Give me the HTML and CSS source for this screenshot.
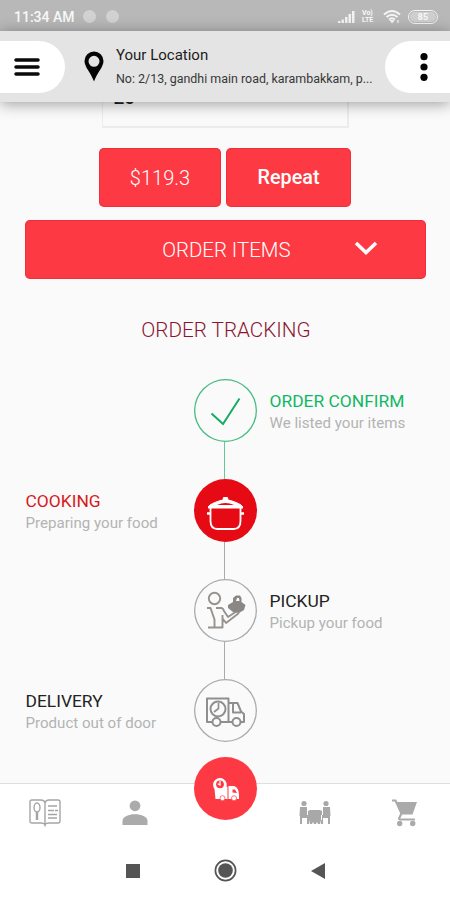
FILE: index.html
```html
<!DOCTYPE html>
<html lang="en">
<head>
<meta charset="utf-8">
<title>Order tracking</title>
<link rel="stylesheet" href="styles.css">
</head>
<body>
<div class="status">
  <span class="clock">11:34 AM</span>
  <i class="blob"></i><i class="blob"></i>
  <svg class="signal" width="18" height="14" viewBox="0 0 18 14" fill="#f2f2f2"><path d="M0 11h2.500v2H0zM3.500 9.500H6V13H3.500zM7 7h2.500v6H7zM10.500 4H13v9h-2.500zM14 1h2.500v12H14z"/></svg>
  <span class="volte"><b>Vo)</b><b>LTE</b></span>
  <svg class="wifi" width="19" height="15" viewBox="0 0 19 15" fill="none" stroke="#f5f5f5" stroke-width="2"><path d="M1 5.500q8-7 16 0M3.500 8q5.500-4.500 11 0M6 10.500q3-2.500 6 0"/><path d="M7.500 11.500L9 13.500l1.500-2zM15 11v3" stroke-width="1.200"/></svg>
  <span class="battery"><b>85</b></span>
</div>
<header class="header">
  <div class="pill pill-left">
    <svg width="26" height="20" viewBox="0 0 26 20" stroke="#0a0a0a" stroke-width="3.500" stroke-linecap="round"><path d="M2 3h22M2 10h22M2 17h22"/></svg>
  </div>
  <svg class="pin" width="20" height="31" viewBox="0 0 20 31"><path fill="#050505" fill-rule="evenodd" d="M10 .5A9.500 9.500 0 0 0 .5 10C.5 16 7 22 10 30.500 13 22 19.500 16 19.500 10A9.500 9.500 0 0 0 10 .5zM10 4.800a5.500 5.500 0 1 1 0 11 5.500 5.500 0 0 1 0-11z"/></svg>
  <div class="place">
    <div class="place-name">Your Location</div>
    <div class="place-address">No: 2/13, gandhi main road, karambakkam, p...</div>
  </div>
  <div class="pill pill-right">
    <svg width="8" height="28" viewBox="0 0 8 28" fill="#050505"><circle cx="4" cy="3.700" r="3.600"/><circle cx="4" cy="14" r="3.600"/><circle cx="4" cy="24.300" r="3.600"/></svg>
  </div>
</header>
<main class="content">
  <div class="field"><div class="field-text">20</div></div>
  <div class="actions">
    <div class="btn price">$119.3</div>
    <div class="btn repeat">Repeat</div>
  </div>
  <div class="btn items"><span>ORDER ITEMS</span>
    <svg width="24" height="16" viewBox="0 0 24 16" fill="none" stroke="#fff" stroke-width="3.500"><path d="M2 3l10 9.500L22 3"/></svg>
  </div>
  <h1 class="title">ORDER TRACKING</h1>
  <section class="timeline">
    <div class="step confirm">
      <div class="mark"><svg width="63" height="63" viewBox="0 0 63 63" fill="none" stroke="#16ac62" stroke-width="2"><path d="M17.500 34.500L29 45 45.500 19.500"/></svg></div>
      <div class="label right"><div class="name w-confirm">ORDER CONFIRM</div><div class="note">We listed your items</div></div>
    </div>
    <div class="step cooking">
      <div class="label left"><div class="name w-cooking">COOKING</div><div class="note">Preparing your food</div></div>
      <div class="mark"><svg width="63" height="63" viewBox="0 0 63 63" fill="none" stroke="#fff" stroke-width="1.800" stroke-linejoin="round"><path d="M14 28.500h35M16.500 29v13q0 8 7 8h16q7 0 7-8V29"/><path d="M16 34.500h-3M47 34.500h3" stroke-width="2.500"/><path fill="#fff" stroke-width="1" d="M14 28c2-3 7-4.500 11-6l4-1 .5-2.500h4l.5 2.500 4 1c4 1.500 9 3 11 6z"/><path fill="#e60a15" stroke="none" d="M23 26q8.500-4 17 0z"/></svg></div>
    </div>
    <div class="step pickup">
      <div class="mark"><svg width="63" height="63" viewBox="0 0 63 63" fill="none" stroke="#96928f" stroke-width="1.900" stroke-linejoin="round"><circle cx="20.500" cy="19.500" r="5.700"/><path d="M13 29h3.500l4 11.500V48M14 48.500h14.500V36M22 29h5q2 0 3 3l4 6 9-6M29 40l3 4 13-10"/><path fill="#8b8784" stroke="none" d="M34 26l5-3v-4l3-2.500h4l1.500 2.500v4l4 3-1.500 5-5 3-6-1-5-4z"/><path d="M42 22l1-3h2l.5 3z" fill="#fafafa" stroke="none"/></svg></div>
      <div class="label right"><div class="name w-pickup">PICKUP</div><div class="note">Pickup your food</div></div>
    </div>
    <div class="step delivery">
      <div class="label left"><div class="name w-delivery">DELIVERY</div><div class="note">Product out of door</div></div>
      <div class="mark"><svg width="63" height="63" viewBox="0 0 63 63" fill="none" stroke="#8f8f8f" stroke-width="2" stroke-linejoin="round"><path d="M18 43h-5V19.500h21.500V43H27M34.500 24h9l3.500 8.500 3 2.500v8h-3M34.500 43H38M39 25v8.500h8"/><circle cx="24" cy="30" r="7.500"/><path d="M24.500 24v5.500L20 33" stroke-width="1.700"/><circle cx="22.500" cy="43" r="4"/><circle cx="42.500" cy="43" r="4"/></svg></div>
    </div>
  </section>
</main>
<nav class="tabs">
  <div class="tab"><svg width="34" height="30" viewBox="0 0 34 30" fill="none" stroke="#a5a5a5" stroke-width="1.400"><path d="M4 2h9q3.500 0 4 3 .5-3 4-3h9q2 0 2 2v19q0 2-2 2h-9q-3 0-4 1.500-1-1.500-4-1.500H4q-2 0-2-2V4q0-2 2-2zM17 4v24.500"/><ellipse cx="9" cy="9.500" rx="3" ry="4.500"/><path d="M9 14v8" stroke-width="2.500"/><path d="M20 8h9M20 12.500h6M27 12.500h3M20 16.500h9M20 20h9"/></svg></div>
  <div class="tab"><svg width="26" height="26" viewBox="0 0 26 26" fill="#ababab"><circle cx="13" cy="5.800" r="5.400"/><path d="M.5 25v-4C.5 12 25.500 12 25.500 21v4z"/></svg></div>
  <div class="tab fab-slot"><div class="fab"><svg width="28" height="24" viewBox="0 0 28 24" fill="#fff"><path d="M2.500 12a6.800 6.800 0 1 1 12-2.500l1 .5V22H3.500z"/><path d="M16.500 9h5.500q4.500 1.500 5 8v5H16.500z"/><circle cx="8" cy="7.300" r="3.900" fill="#fd3a43"/><path d="M8 4v4L5.800 6.800" stroke="#fff" fill="none" stroke-width="1.300"/><circle cx="10.500" cy="21.200" r="2.500"  stroke="#fd3a43" stroke-width=".7"/><circle cx="22" cy="21.200" r="2.500" stroke="#fd3a43" stroke-width=".7"/><path d="M20.500 12.500h2.500l2 3.500-4.500-.5z" fill="#fd3a43"/></svg></div></div>
  <div class="tab"><svg width="32" height="26" viewBox="0 0 32 26" fill="#a8a8a8"><circle cx="5" cy="3.500" r="2.600"/><circle cx="27" cy="3.500" r="2.600"/><path d="M1 7h7v8h2v9H8v-6H3v6H1v-8H.5zM31 7h-7v8h-2v9h2v-6h5v6h2v-8h.5zM11 10h10l2 1v9h-1l-1 4h-2l-1-2-1 2h-2l-1-2-1 2h-2l-1-4H9v-9z"/></svg></div>
  <div class="tab"><svg width="28" height="28" viewBox="0 0 28 28" fill="#aaa"><path d="M6 3h20l-4.500 12.500H10z"/><path d="M1 1.500h3.500l6 13-2.500 5q0 1 1.500 1H24" fill="none" stroke="#aaa" stroke-width="2.200"/><circle cx="8.700" cy="24.500" r="2.700"/><circle cx="21.700" cy="24.500" r="2.700"/></svg></div>
</nav>
<footer class="system">
  <svg width="14" height="14"><path fill="#555" d="M0 0h14v14H0z"/></svg>
  <svg width="23" height="23" viewBox="0 0 23 23"><circle cx="11.500" cy="11.500" r="10.100" fill="none" stroke="#555" stroke-width="1.700"/><circle cx="11.500" cy="11.500" r="7.300" fill="#555"/></svg>
  <svg width="14" height="16" viewBox="0 0 14 16"><path fill="#555" d="M14 0v16L0 8z"/></svg>
</footer>
</body>
</html>
```
FILE: styles.css
```css
* { box-sizing: border-box; }
body {
  margin: 0;
  height: 900px;
  display: flex;
  flex-direction: column;
  overflow: hidden;
  background: #fafafa;
  font-family: Roboto, "Liberation Sans", sans-serif;
  white-space: nowrap;
}
svg { display: block; flex: none; }

.status {
  flex: none;
  height: 31px;
  background: #b8b8b8;
  display: flex;
  align-items: center;
  padding: 2px 12px 0 14px;
  color: #f8f8f8;
}
.clock { width: 69px; font-size: 14px; font-weight: 500; }
.blob {
  width: 13px;
  height: 13px;
  margin-right: 10px;
  border-radius: 50%;
  background: #d2d2d2;
}
.signal { margin-left: auto; }
.volte {
  display: flex;
  flex-direction: column;
  width: 14px;
  margin: 0 7px 0 6px;
  font-size: 7px;
  line-height: 7px;
}
.battery {
  width: 30px;
  height: 14px;
  margin-left: 6px;
  padding: 1px;
  border: 1px solid #f4f4f4;
  border-radius: 8px;
  font-size: 9px;
  line-height: 10px;
  text-align: center;
}
.battery b { display: block; border-radius: 5px; background: #cfcfcf; }

.header {
  flex: none;
  height: 71px;
  position: relative;
  z-index: 2;
  display: flex;
  align-items: center;
  background: #e4e4e4;
  box-shadow: 0 2px 14px rgba(0, 0, 0, .38);
}
.pill {
  width: 65px;
  height: 52px;
  display: flex;
  align-items: center;
  background: #fff;
}
.pill-left { border-radius: 0 26px 26px 0; padding-left: 14px; }
.pill-right { border-radius: 26px 0 0 26px; margin-left: auto; padding-left: 35px; }
.pin { margin-left: 19px; }
.place { margin-left: 12px; padding-top: 2px; }
.place-name { font-size: 15px; line-height: 23px; color: #1c1c1c; }
.place-address { font-size: 12.450px; line-height: 24px; color: #383838; }

.content {
  flex: 1;
  display: flex;
  flex-direction: column;
  align-items: center;
  min-height: 0;
  overflow: hidden;
}
.field {
  flex: none;
  width: 247px;
  height: 26px;
  border: 1px solid #ececec;
  border-width: 0 2px 2px 1px;
  overflow: hidden;
}
.field-text { margin-top: -15px; padding-left: 11px; font-size: 19px; line-height: 22px; font-weight: 500; color: #222; }
.actions { display: flex; gap: 5px; margin-top: 20px; }
.btn {
  flex: none;
  height: 59px;
  display: flex;
  align-items: center;
  justify-content: center;
  border-radius: 5px;
  background: #fd3a43;
  box-shadow: inset 0 0 1px 1px rgba(205, 20, 40, .3);
  color: #fff;
}
.price { width: 122px; font: 300 20px Roboto, sans-serif; }
.repeat { width: 125px; font-size: 19.800px; font-weight: 500; }
.items {
  width: 401px;
  margin-top: 13px;
  justify-content: flex-end;
  font-size: 20.400px;
  font-weight: 300;
}
.items svg { margin: 0 48px 4px 63px; }
.title {
  margin: 39px 0 0;
  padding-left: 2px;
  font-size: 20.700px;
  line-height: 24px;
  font-weight: 300;
  color: #8a1530;
}

.timeline { width: 100%; margin-top: 37px; }
.step {
  height: 100px;
  display: grid;
  grid-template-columns: 168px 63px 168px;
  justify-content: center;
  align-items: start;
}
.mark {
  grid-column: 2;
  grid-row: 1;
  position: relative;
  width: 63px;
  height: 63px;
  border-radius: 50%;
  box-shadow: inset 0 0 0 1.300px #aaa;
}
.mark::after {
  content: "";
  position: absolute;
  left: 30px;
  top: 63px;
  width: 1px;
  height: 37px;
  background: #aaa;
}
.confirm .mark { box-shadow: inset 0 0 0 1.300px #46bb83; }
.confirm .mark::after { background: #67c89a; }
.cooking .mark { background: #e60a15; box-shadow: none; }
.delivery .mark::after { display: none; }
.label { grid-row: 1; padding-top: 10px; }
.left { grid-column: 1; }
.right { grid-column: 3; padding-left: 13px; }
.name { font-size: 17.400px; line-height: 24px; color: #222; }
.note { font-size: 15.100px; line-height: 20px; color: #b3b3b3; }
.w-confirm { color: #12b765; }
.w-cooking { color: #d71920; }

.tabs {
  flex: none;
  height: 58px;
  display: grid;
  grid-template-columns: repeat(5, 90px);
  border-top: 1px solid #dedede;
  background: #fff;
  position: relative;
}
.tab { display: flex; align-items: center; justify-content: center; }
.fab {
  width: 63px;
  height: 63px;
  margin: -48px 0 0 1px;
  display: flex;
  align-items: center;
  justify-content: center;
  border-radius: 50%;
  background: #fd3a43;
}
.system {
  flex: none;
  height: 59px;
  display: flex;
  align-items: center;
  justify-content: center;
  gap: 74px;
  background: #fff;
}
```
